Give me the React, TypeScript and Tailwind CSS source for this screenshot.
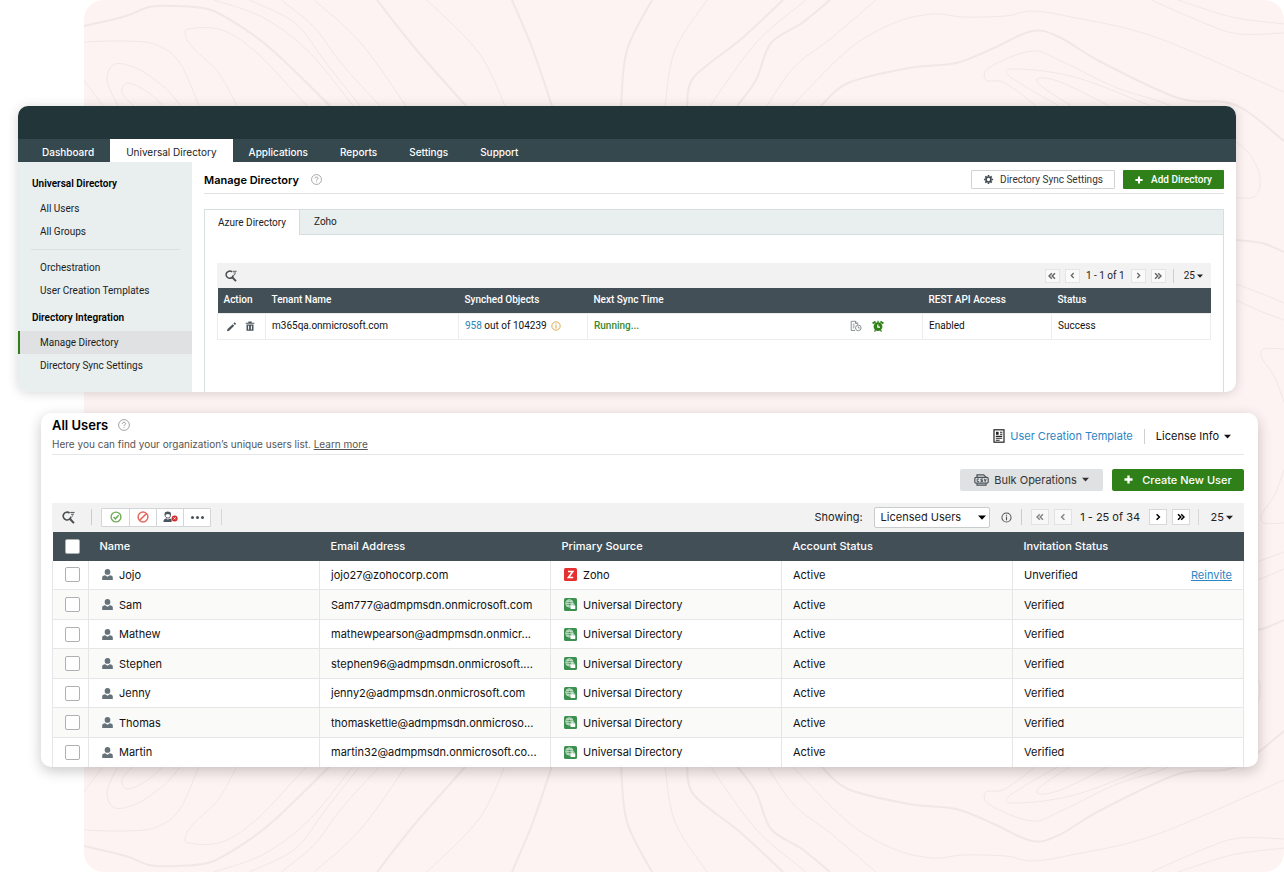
import React from 'react';

type Point = [number, number];

interface ContourLine {
    width: number;
    points: Point[];
}

const CONTOURS: ContourLine[] = [
    { width: 2, points: [[84, 26], [126, 16], [149, 7], [176, 6], [211, 10], [249, 32], [280, 57], [330, 106]] },
    { width: 1, points: [[84, 42], [126, 41], [157, 45], [180, 63], [199, 106]] },
    { width: 1, points: [[237, 106], [218, 72], [195, 50], [186, 37], [189, 29], [222, 30], [257, 53], [307, 106]] },
    { width: 1, points: [[214, 0], [264, 18], [310, 53], [353, 106]] },
    { width: 1, points: [[249, 0], [295, 23], [326, 63], [360, 106]] },
    { width: 1, points: [[281, 0], [314, 27], [341, 63], [380, 106]] },
    { width: 1, points: [[314, 0], [360, 42], [406, 106]] },
    { width: 2, points: [[377, 0], [414, 47], [466, 106]] },
    { width: 1, points: [[427, 0], [479, 53], [505, 106]] },
    { width: 2, points: [[512, 0], [533, 50], [552, 106]] },
    { width: 2, points: [[652, 0], [627, 50], [621, 106]] },
    { width: 1, points: [[707, 0], [675, 50], [665, 106]] },
    { width: 2, points: [[783, 0], [740, 40], [694, 77], [687, 106]] },
    { width: 1, points: [[806, 0], [756, 43], [710, 106]] },
    { width: 2, points: [[830, 0], [802, 23], [771, 43], [756, 80], [737, 106]] },
    { width: 1, points: [[876, 0], [829, 40], [794, 67], [767, 106]] },
    { width: 1, points: [[792, 106], [848, 50], [894, 23], [933, 14], [963, 17], [1005, 16], [1032, 11], [1071, 17], [1155, 37], [1284, 92]] },
    { width: 2, points: [[821, 106], [848, 83], [909, 68], [956, 63], [994, 48], [1032, 31], [1059, 37], [1101, 62], [1178, 98], [1224, 102], [1248, 112], [1284, 141]] },
    { width: 1, points: [[1036, 106], [1005, 83], [986, 80], [990, 67], [1032, 51], [1063, 62], [1117, 88], [1171, 106], [1236, 142], [1256, 165], [1260, 185], [1254, 197], [1236, 198]] },
    { width: 1, points: [[1059, 106], [1008, 75], [1021, 69], [1078, 78], [1151, 106]] },
    { width: 1, points: [[1071, 106], [1040, 85], [1040, 78], [1063, 83], [1109, 106]] },
    { width: 1, points: [[1151, 0], [1209, 25], [1240, 34], [1284, 33]] },
    { width: 1, points: [[1178, 0], [1232, 17], [1284, 24]] },
    { width: 1, points: [[118, 106], [107, 80], [115, 64], [138, 69], [164, 87], [181, 106]] },
    { width: 1, points: [[134, 106], [122, 93], [128, 83], [149, 93], [163, 106]] },
    { width: 1, points: [[84, 80], [103, 106]] },
    { width: 2, points: [[1236, 240], [1262, 243], [1284, 252]] },
    { width: 1, points: [[1236, 284], [1260, 293], [1284, 303]] },
    { width: 1, points: [[1236, 300], [1260, 311], [1284, 320]] },
    { width: 1, points: [[1284, 349], [1264, 349], [1262, 358], [1274, 376], [1284, 402]] },
];

// smooth curve through all the points
const toPath = (points: Point[]) => {
    let d = `M${points[0][0]} ${points[0][1]}`;
    for (let i = 0; i < points.length - 1; i++) {
        const p0 = points[i - 1] ?? points[i];
        const p1 = points[i];
        const p2 = points[i + 1];
        const p3 = points[i + 2] ?? p2;
        d += `C${p1[0] + (p2[0] - p0[0]) / 6} ${p1[1] + (p2[1] - p0[1]) / 6} ${p2[0] - (p3[0] - p1[0]) / 6} ${p2[1] - (p3[1] - p1[1]) / 6} ${p2[0]} ${p2[1]}`;
    }
    return d;
};

const Contours = () => (
    <svg viewBox="84 0 1200 872" preserveAspectRatio="none" className="w-full h-full" fill="none" stroke="#f1e7e6" aria-hidden="true">
        {['', 'matrix(1 0 0 -1 0 872)'].map((transform) => (
            <g key={transform} transform={transform || undefined}>
                {CONTOURS.map((line, i) => (
                    <path key={i} d={toPath(line.points)} strokeWidth={line.width} />
                ))}
            </g>
        ))}
    </svg>
);

/* ---------- icons ---------- */

interface IconProps {
    className?: string;
}

const HelpIcon = ({ className }: IconProps) => (
    <svg viewBox="0 0 12 12" className={className} fill="none" stroke="#999" aria-hidden="true">
        <circle cx="6" cy="6" r="5.4" strokeWidth="0.9" />
        <path d="M4.4 4.8c0-2.1 3.3-2 3.2 0 0 1.1-1.6 1.1-1.6 2.3M6 8.2v.9" strokeWidth="1" />
    </svg>
);

const SearchIcon = ({ className }: IconProps) => (
    <svg viewBox="0 0 12 12" className={className} fill="none" stroke="#4a4f52" aria-hidden="true">
        <path d="M7 1.9A3.6 3.6 0 1 0 8.300 5.200" strokeWidth="1.5" />
        <path d="M7 7l4 4.200" strokeWidth="1.900" />
        <path d="M7.600 1.300h4M8.400 3h2.600M9 4.600h1.200" strokeWidth="0.900" />
    </svg>
);

const InfoIcon = ({ className }: IconProps) => (
    <svg viewBox="0 0 12 12" className={className} fill="none" stroke="currentColor" aria-hidden="true">
        <circle cx="6" cy="6" r="5" strokeWidth="1.1" />
        <path d="M6 5v4M6 3v1.2" strokeWidth="1.2" />
    </svg>
);

const GearIcon = ({ className }: IconProps) => (
    <svg viewBox="0 0 12 12" className={className} fill="none" stroke="#414a50" aria-hidden="true">
        <circle cx="6" cy="6" r="2.7" strokeWidth="1.8" />
        <path d="M6 1v1.6M6 9.4V11M1 6h1.6M9.4 6H11M2.5 2.5l1.2 1.2M8.3 8.3l1.2 1.2M9.5 2.5L8.3 3.7M3.7 8.3L2.5 9.5" strokeWidth="1.8" />
    </svg>
);

const PlusIcon = ({ className }: IconProps) => (
    <svg viewBox="0 0 10 10" className={className} stroke="white" strokeWidth="2.6" aria-hidden="true">
        <path d="M5 .5v9M.5 5h9" />
    </svg>
);

const CaretIcon = ({ className }: IconProps) => (
    <svg viewBox="0 0 8 5" className={className} fill="currentColor" aria-hidden="true">
        <path d="M0 0.5h8L4 4.8z" />
    </svg>
);

const PencilIcon = ({ className }: IconProps) => (
    <svg viewBox="0 0 12 12" className={className} fill="#4b555b" aria-hidden="true">
        <path d="M1 11.200l.7-2.500 5.600-5.200 1.700 1.700-5.600 5.300zM8.100 2.700l1.300-1.300 1.700 1.700-1.300 1.300z" />
    </svg>
);

const TrashIcon = ({ className }: IconProps) => (
    <svg viewBox="0 0 12 12" className={className} fill="#4b555b" aria-hidden="true">
        <path d="M4 .6h4V2h3.200v1.300H.8V2H4z" />
        <path fillRule="evenodd" d="M1.800 4.200h8.400v7.400H1.800zM3.700 5.800v4.400h1.200V5.800zM7.100 5.800v4.400h1.200V5.800z" />
    </svg>
);

const LogIcon = ({ className }: IconProps) => (
    <svg viewBox="0 0 12 12" className={className} fill="none" stroke="#808689" strokeWidth="0.9" aria-hidden="true">
        <path d="M5 10.5H1.2V1.3h4.5l2 2v1.4M5.5 1.3v2.2h2M2.8 4.2h1.6M2.8 6h2M2.8 7.8h1.4" />
        <circle cx="8.3" cy="7.9" r="2.8" />
        <path d="M8.3 6.4V8h1.5" />
    </svg>
);

const AlarmIcon = ({ className }: IconProps) => (
    <svg viewBox="0 0 12 12" className={className} fill="none" aria-hidden="true">
        <circle cx="6" cy="6.600" r="4.400" fill="#2f8018" />
        <path d="M.6 3.600L3.600 1.400M11.400 3.600L8.400 1.400" stroke="#2f8018" strokeWidth="1.800" />
        <path d="M3.400 10L2.600 11.600M8.600 10l.8 1.600M6 .8v2" stroke="#2f8018" strokeWidth="1.300" />
        <path d="M5.800 4.400v2.700h2.200" stroke="white" strokeWidth="1.200" />
    </svg>
);

const TemplateIcon = ({ className }: IconProps) => (
    <svg viewBox="0 0 12 14" className={className} fill="none" stroke="#222" aria-hidden="true">
        <rect x="1" y="0.8" width="10" height="12.4" strokeWidth="1.2" />
        <rect x="3" y="2.8" width="2.6" height="3" fill="#222" stroke="none" />
        <path d="M7 3.2h2.4M7 5.3h2.4M2.8 7.4h6.4M2.8 9.3h6.4M2.8 11.2h3.8" strokeWidth="1.1" />
    </svg>
);

const CsvIcon = ({ className }: IconProps) => (
    <svg viewBox="0 0 15 12" className={className} fill="none" stroke="#4a5359" aria-hidden="true">
        <path d="M3 3.200V.8h6.600l2.400 2.400M3 9.4v1.8h9V9.4" strokeWidth="1.200" />
        <rect x="0.8" y="3.4" width="13.4" height="5.8" rx="1.4" strokeWidth="1.200" />
        <path d="M5 5H3.2v2.6H5M8.8 5H6.9v1.3h1.7v1.3H6.6M10.2 4.8l1 2.8 1-2.8" strokeWidth="1" />
    </svg>
);

const UserIcon = ({ className }: IconProps) => (
    <svg viewBox="0 0 12 12" className={className} fill="#66727a" aria-hidden="true">
        <ellipse cx="6" cy="3.200" rx="3.100" ry="3.200" />
        <path d="M.2 11.900V9.300C.2 7.900 1.500 7 3.400 6.900L6 8.500l2.600-1.600c1.900.1 3.200 1 3.200 2.400v2.600z" />
    </svg>
);

const ZohoIcon = ({ className }: IconProps) => (
    <svg viewBox="0 0 12 12" className={className} aria-hidden="true">
        <rect width="12" height="12" rx="1.4" fill="#e4302f" />
        <path d="M3.7 3.2h4.4L4.1 8.8h4.4" fill="none" stroke="white" strokeWidth="1.5" />
    </svg>
);

const DirectoryIcon = ({ className }: IconProps) => (
    <svg viewBox="0 0 12 12" className={className} fill="none" stroke="#d5e9d8" aria-hidden="true">
        <rect width="12" height="12" rx="1.4" fill="#3d9150" stroke="none" />
        <circle cx="5" cy="5" r="3.4" strokeWidth="0.8" />
        <path d="M1.8 5h6.6M2.4 3.2h5.2M2.4 6.8h4M5 1.6c-2 2-2 4.8 0 6.8M5 1.6c2 2 2 4 1.4 5" strokeWidth="0.7" />
        <rect x="6" y="6.8" width="4.4" height="3.4" rx="0.4" fill="white" stroke="none" />
        <path d="M7.1 6.8V5.6h2.2v1.2" strokeWidth="0.7" />
    </svg>
);

const EnableIcon = ({ className }: IconProps) => (
    <svg viewBox="0 0 12 12" className={className} fill="none" stroke="#6fae57" aria-hidden="true">
        <circle cx="6" cy="6" r="4.9" strokeWidth="1.4" />
        <path d="M3.6 6l1.8 1.8 3.2-3.6" strokeWidth="1.5" />
    </svg>
);

const DisableIcon = ({ className }: IconProps) => (
    <svg viewBox="0 0 12 12" className={className} fill="none" stroke="#e76a63" strokeWidth="1.5" aria-hidden="true">
        <circle cx="6" cy="6" r="4.9" />
        <path d="M2.6 9.4l6.8-6.8" />
    </svg>
);

const RemoveUserIcon = ({ className }: IconProps) => (
    <svg viewBox="0 0 15 12" className={className} fill="none" aria-hidden="true">
        <path d="M2.200 3.200v1.600c0 1.200 1.200 2.200 2.600 2.200s2.600-1 2.600-2.200V3.200" stroke="#4a5359" />
        <path d="M1.600 4V2.800C1.600-.2 8-.2 8 2.800V4L4.800 2.900z" fill="#4a5359" />
        <path d="M.4 11c0-2.200 1.200-3.200 3-3.400l1.500 1.200 1.500-1.200c1 .1 1.800.5 2.200 1V11z" fill="#4a5359" />
        <circle cx="11.600" cy="7.400" r="3" fill="#cc2b2b" />
        <path d="M10.600 6.400l2 2M12.600 6.400l-2 2" stroke="white" strokeWidth="0.900" />
    </svg>
);

const Chevron = ({ double, left, className }: { double?: boolean; left?: boolean; className?: string }) => (
    <svg viewBox="0 0 8 8" className={className} fill="none" stroke="currentColor" strokeWidth="1.5" aria-hidden="true">
        <g transform={left ? 'matrix(-1 0 0 1 8 0)' : undefined}>
            {double ? <path d="M1 1.200L3.800 4 1 6.800M4.200 1.200L7 4 4.200 6.800" /> : <path d="M2.600 1.200L5.400 4 2.600 6.800" />}
        </g>
    </svg>
);

/* ---------- manage directory ---------- */

const NAV_TABS = ['Dashboard', 'Universal Directory', 'Applications', 'Reports', 'Settings', 'Support'];

const SideLink = ({ label, active }: { label: string; active?: boolean }) => (
    <a
        href="#"
        className={`flex items-center h-[23px] text-[#1c1c1c] pl-5 border-l-2 ${active ? 'bg-[#dfe1e2] border-[#2f8018]' : 'border-transparent'}`}
    >
        {label}
    </a>
);

const SmallPagerButton = ({ double, left }: { double?: boolean; left?: boolean }) => (
    <button aria-label="Change page" className="w-[15px] h-[14px] border border-[#e4e4e4] bg-[#fafafa] text-[#666] flex items-center justify-center">
        <Chevron double={double} left={left} className={double ? 'w-2 h-2' : 'w-[7px] h-[7px]'} />
    </button>
);

const ManageDirectory = () => (
    <section className="ml-[18px] mr-12 rounded-[10px] overflow-hidden bg-white shadow-[0_1px_12px_rgba(0,0,0,0.16)]">
        <div className="h-[33px] bg-[#223539]" />
        <nav className="h-[23px] bg-[#34484d] flex pl-2">
            {NAV_TABS.map((tab) => (
                <a
                    key={tab}
                    href="#"
                    className={`px-4 flex items-center pt-[2px] text-[10px] leading-4 ${tab === 'Universal Directory' ? 'bg-white text-[#222]' : 'text-white font-medium'}`}
                >
                    {tab}
                </a>
            ))}
        </nav>

        <div className="flex text-[10px] leading-4 font-['Roboto','Liberation_Sans',sans-serif]">
            <aside className="w-[174px] shrink-0 bg-[#e9eeef] pt-[14px]">
                <h2 className="pl-[14px] h-[21px] font-semibold text-black">Universal Directory</h2>
                <SideLink label="All Users" />
                <SideLink label="All Groups" />
                <hr className="border-[#dadfe0] ml-[13px] mr-3 mt-[6px] mb-[6px]" />
                <SideLink label="Orchestration" />
                <SideLink label="User Creation Templates" />
                <h2 className="pl-[14px] h-[29px] leading-8 font-semibold text-black">Directory Integration</h2>
                <SideLink label="Manage Directory" active />
                <SideLink label="Directory Sync Settings" />
            </aside>

            <main className="flex-1 min-w-0 px-3">
                <header className="flex items-center h-8 border-b border-[#e2e2e2] pt-1">
                    <h1 className="text-[11px] font-semibold text-black font-['Inter','Liberation_Sans',sans-serif]">Manage Directory</h1>
                    <HelpIcon className="w-[11px] h-[11px] ml-3" />
                    <div className="ml-auto flex gap-2">
                        <button className="h-[19px] w-36 border border-[#d0d2d3] bg-white rounded-[1px] text-[#333] flex items-center justify-center gap-[6px]">
                            <GearIcon className="w-[11px] h-[11px]" />
                            Directory Sync Settings
                        </button>
                        <button className="h-[19px] w-[101px] bg-[#2f8018] rounded-[1px] font-medium text-white flex items-center justify-center gap-2">
                            <PlusIcon className="w-2 h-2" />
                            Add Directory
                        </button>
                    </div>
                </header>

                <div className="mt-[15px] border border-b-0 border-[#d9dee0]">
                    <div role="tablist" className="flex h-[25px] bg-[#e9eeee] border-b border-[#d5dbde] text-[#222]">
                        <button role="tab" aria-selected="true" className="w-[95px] h-[25px] bg-white border-r border-[#d5dbde]">
                            Azure Directory
                        </button>
                        <button role="tab" aria-selected="false" className="px-[14px]">
                            Zoho
                        </button>
                    </div>

                    <div className="px-3 pt-7 pb-[52px]">
                        <div className="h-[25px] bg-[#f2f2f2] flex items-center px-2 text-[#222]">
                            <button aria-label="Search">
                                <SearchIcon className="w-3 h-3" />
                            </button>
                            <div className="ml-auto flex items-center gap-[5px]">
                                <SmallPagerButton double left />
                                <SmallPagerButton left />
                                <span className="w-[41px] text-center whitespace-nowrap">1 - 1 of 1</span>
                                <SmallPagerButton />
                                <SmallPagerButton double />
                                <span className="w-px h-[14px] bg-[#cfcfcf] ml-[2px]" />
                                <button className="flex items-center gap-[2px] ml-[5px]">
                                    25
                                    <CaretIcon className="w-[6px] h-1" />
                                </button>
                            </div>
                        </div>
                        <table className="w-full table-fixed text-left text-[#111]">
                            <colgroup>
                                <col className="w-12" />
                                <col className="w-[193px]" />
                                <col className="w-[129px]" />
                                <col />
                                <col className="w-[129px]" />
                                <col className="w-[159px]" />
                            </colgroup>
                            <thead className="bg-[#434f57] text-white">
                                <tr className="h-[25px]">
                                    {['Action', 'Tenant Name', 'Synched Objects', 'Next Sync Time', 'REST API Access', 'Status'].map((head) => (
                                        <th key={head} className="font-medium px-[6px]">{head}</th>
                                    ))}
                                </tr>
                            </thead>
                            <tbody>
                                <tr className="h-[26px] border border-[#ececec] [&>td]:border-r [&>td]:border-[#ececec] [&>td]:px-[6px]">
                                    <td>
                                        <div className="flex items-center gap-2 pl-[2px]">
                                            <button aria-label="Edit"><PencilIcon className="w-[11px] h-[11px]" /></button>
                                            <button aria-label="Delete"><TrashIcon className="w-[10px] h-[10px]" /></button>
                                        </div>
                                    </td>
                                    <td>m365qa.onmicrosoft.com</td>
                                    <td>
                                        <div className="flex items-center gap-1 whitespace-nowrap">
                                            <span><a href="#" className="text-[#2c85bb]">958</a> out of 104239</span>
                                            <InfoIcon className="w-[10px] h-[10px] text-[#dba23c]" />
                                        </div>
                                    </td>
                                    <td>
                                        <div className="flex items-center text-[#3a8a2e] font-medium">
                                            Running...
                                            <button aria-label="Sync log" className="ml-auto"><LogIcon className="w-3 h-3" /></button>
                                            <button aria-label="Schedule" className="ml-[10px] mr-8"><AlarmIcon className="w-3 h-3" /></button>
                                        </div>
                                    </td>
                                    <td>Enabled</td>
                                    <td>Success</td>
                                </tr>
                            </tbody>
                        </table>
                    </div>
                </div>
            </main>
        </div>
    </section>
);

/* ---------- all users ---------- */

interface User {
    name: string;
    email: string;
    source: 'Zoho' | 'Universal Directory';
    verified: boolean;
}

const USERS: User[] = [
    { name: 'Jojo', email: 'jojo27@zohocorp.com', source: 'Zoho', verified: false },
    { name: 'Sam', email: 'Sam777@admpmsdn.onmicrosoft.com', source: 'Universal Directory', verified: true },
    { name: 'Mathew', email: 'mathewpearson@admpmsdn.onmicr...', source: 'Universal Directory', verified: true },
    { name: 'Stephen', email: 'stephen96@admpmsdn.onmicrosoft....', source: 'Universal Directory', verified: true },
    { name: 'Jenny', email: 'jenny2@admpmsdn.onmicrosoft.com', source: 'Universal Directory', verified: true },
    { name: 'Thomas', email: 'thomaskettle@admpmsdn.onmicroso...', source: 'Universal Directory', verified: true },
    { name: 'Martin', email: 'martin32@admpmsdn.onmicrosoft.co...', source: 'Universal Directory', verified: true },
];

const Checkbox = ({ label }: { label: string }) => (
    <input type="checkbox" aria-label={label} className="block appearance-none w-[15px] h-[15px] ml-3 rounded-[2px] border border-[#adb1b4] bg-white" />
);

const PagerButton = ({ double, left, disabled }: { double?: boolean; left?: boolean; disabled?: boolean }) => (
    <button
        aria-label="Change page"
        disabled={disabled}
        className={`w-[18px] h-4 border flex items-center justify-center ${disabled ? 'border-[#e2e2e2] bg-[#f8f8f8] text-[#858585]' : 'border-[#d8d8d8] bg-white text-black'}`}
    >
        <Chevron double={double} left={left} className="w-2 h-2" />
    </button>
);

const AllUsers = () => (
    <section className="mt-[21px] ml-[41px] mr-[26px] pl-[11px] pr-[14px] rounded-[10px] overflow-hidden bg-white shadow-[0_4px_14px_rgba(0,0,0,0.22)]">
        <header className="flex items-center justify-between h-[42px] border-b border-[#e6e6e6]">
            <div className="pt-[2px]">
                <div className="flex items-center gap-[10px]">
                    <h1 className="text-[13px] leading-4 font-semibold text-black">All Users</h1>
                    <HelpIcon className="w-3 h-3" />
                </div>
                <p className="pt-[3px] text-[10px] leading-4 text-[#555]">
                    Here you can find your organization’s unique users list. <a href="#" className="underline">Learn more</a>
                </p>
            </div>
            <div className="flex items-center pt-[6px] text-[11px] leading-4">
                <TemplateIcon className="w-3 h-[14px]" />
                <a href="#" className="ml-[5px] text-[#2c85c4]">User Creation Template</a>
                <span className="w-px h-[15px] bg-[#d0d0d0] mx-[11px]" />
                <button className="flex items-center gap-[5px] mr-[13px] text-[#111]">
                    License Info
                    <CaretIcon className="w-[7px] h-[5px]" />
                </button>
            </div>
        </header>

        <div className="flex justify-end gap-[9px] pt-[14px] pb-3">
            <button className="w-[143px] h-[22px] rounded-[2px] bg-[#dfe1e3] text-[11px] leading-4 text-[#333] flex items-center justify-center gap-[5px]">
                <CsvIcon className="w-[15px] h-3" />
                Bulk Operations
                <CaretIcon className="w-[7px] h-[5px]" />
            </button>
            <button className="w-[132px] h-[22px] rounded-[2px] bg-[#2f8018] text-[11px] leading-4 font-medium text-white flex items-center justify-center gap-[9px]">
                <PlusIcon className="w-[9px] h-[9px]" />
                Create New User
            </button>
        </div>

        <div className="h-[29px] bg-[#f2f2f2] flex items-center pl-[10px] pr-[11px] text-[11px] leading-4 text-[#222]">
            <button aria-label="Search">
                <SearchIcon className="w-[13px] h-[13px]" />
            </button>
            <span className="w-px h-4 bg-[#ccc] ml-4 mr-[9px]" />
            <div className="flex h-[19px] border border-[#d3d6d8] bg-white divide-x divide-[#d3d6d8] rounded-[1px]">
                <button aria-label="Enable" className="w-7 flex items-center justify-center"><EnableIcon className="w-3 h-3" /></button>
                <button aria-label="Disable" className="w-[27px] flex items-center justify-center"><DisableIcon className="w-3 h-3" /></button>
                <button aria-label="Remove" className="w-[27px] flex items-center justify-center"><RemoveUserIcon className="w-[15px] h-3" /></button>
                <button aria-label="More" className="w-[26px] flex items-center justify-center gap-[2px]">
                    <i className="w-[3px] h-[3px] rounded-full bg-[#4a5359]" />
                    <i className="w-[3px] h-[3px] rounded-full bg-[#4a5359]" />
                    <i className="w-[3px] h-[3px] rounded-full bg-[#4a5359]" />
                </button>
            </div>
            <span className="w-px h-4 bg-[#d3d8db] ml-[10px]" />

            <div className="ml-auto flex items-center">
                <label htmlFor="showing">Showing:</label>
                <div className="relative ml-[11px]">
                    <select id="showing" className="appearance-none block w-[116px] h-[21px] pl-[6px] border border-[#c9cccd] rounded-[2px] bg-white">
                        <option>Licensed Users</option>
                    </select>
                    <CaretIcon className="absolute right-1 top-2 w-2 h-[5px] text-black pointer-events-none" />
                </div>
                <InfoIcon className="w-[11px] h-[11px] ml-[11px] text-[#555]" />
                <span className="w-px h-4 bg-[#ccc] mx-[9px]" />
                <div className="flex items-center gap-[5px]">
                    <PagerButton double left disabled />
                    <PagerButton left disabled />
                    <span className="w-[67px] text-center whitespace-nowrap">1 - 25 of 34</span>
                    <PagerButton />
                    <PagerButton double />
                </div>
                <span className="w-px h-4 bg-[#d8d8d8] ml-2 mr-3" />
                <button className="flex items-center gap-[2px]">
                    25
                    <CaretIcon className="w-[7px] h-[5px]" />
                </button>
            </div>
        </div>

        <table className="w-full table-fixed text-left text-[11px] leading-4 text-[#111]">
            <colgroup>
                <col className="w-9" />
                <col />
                <col />
                <col />
                <col />
                <col />
            </colgroup>
            <thead className="bg-[#434f57] text-white">
                <tr className="h-[29px]">
                    <th className="p-0"><Checkbox label="Select all users" /></th>
                    {['Name', 'Email Address', 'Primary Source', 'Account Status', 'Invitation Status'].map((head) => (
                        <th key={head} className="font-medium px-[11px]">{head}</th>
                    ))}
                </tr>
            </thead>
            <tbody>
                {USERS.map((user) => (
                    <tr
                        key={user.name}
                        className="h-[29px] even:h-[30px] even:bg-[#fafaf9] border-x border-b last:border-b-0 border-[#e4e6e7] [&>td]:border-r [&>td]:border-[#e4e6e7] [&>td]:px-[11px]"
                    >
                        <td className="!px-0"><Checkbox label={`Select ${user.name}`} /></td>
                        <td>
                            <div className="flex items-center gap-[6px] pl-[2px]">
                                <UserIcon className="w-[11px] h-[11px]" />
                                {user.name}
                            </div>
                        </td>
                        <td className="whitespace-nowrap">{user.email}</td>
                        <td>
                            <div className="flex items-center gap-[6px] pl-[2px]">
                                {user.source === 'Zoho' ? <ZohoIcon className="w-[13px] h-[13px]" /> : <DirectoryIcon className="w-[13px] h-[13px]" />}
                                {user.source}
                            </div>
                        </td>
                        <td>Active</td>
                        <td>
                            {user.verified ? 'Verified' : (
                                <div className="flex justify-between">
                                    Unverified
                                    <a href="#" className="text-[#2c85c4] underline">Reinvite</a>
                                </div>
                            )}
                        </td>
                    </tr>
                ))}
            </tbody>
        </table>
    </section>
);

const App: React.FC = () => {
    return (
        <div className="relative isolate min-h-screen bg-white pt-[106px] pb-[105px] font-['Inter','Liberation_Sans',sans-serif]">
            <div className="absolute inset-y-0 left-[84px] right-0 -z-10 rounded-[20px] overflow-hidden bg-[#fdf3f2]">
                <Contours />
            </div>
            <ManageDirectory />
            <AllUsers />
        </div>
    );
};

export default App;
